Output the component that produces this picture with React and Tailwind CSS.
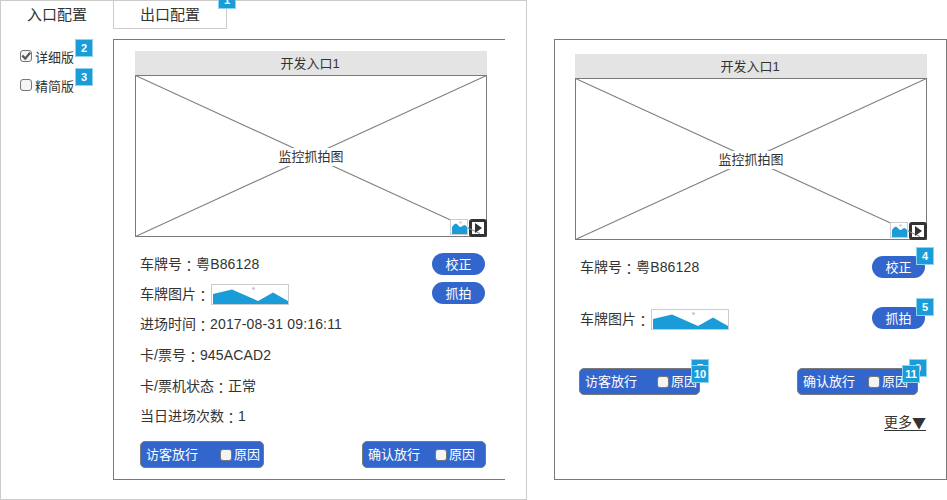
import React from "react";

const cjk = "font-['Liberation_Sans','Noto_Sans_CJK_SC',sans-serif]";

function Badge({ n, className }) {
  return (
    <span
      className={`absolute z-10 flex h-[18px] w-[18px] items-center justify-center border border-[#8fd3ef] bg-[#1a9cd8] font-['Liberation_Sans',sans-serif] text-[11px] leading-none font-bold text-white ${className}`}
    >
      {n}
    </span>
  );
}

function Box({ checked = false }) {
  return (
    <span className="flex h-3 w-3 shrink-0 rounded-[3px] border border-[#777] bg-[#f4f4f4]">
      {checked && (
        <svg viewBox="0 0 10 10" className="h-[10px] w-[10px] overflow-visible">
          <path d="M1.3 4.6 L4.2 7.6 L9.2 1.6" fill="none" stroke="#555" strokeWidth="2.2" />
        </svg>
      )}
    </span>
  );
}

function Plate() {
  return (
    <svg width="78" height="21" viewBox="0 0 78 21" className="ml-[1px] shrink-0">
      <rect x="0.5" y="0.5" width="77" height="20" fill="#fff" stroke="#ccc" />
      <path d="M2 10 L21 5.5 L47 17 L62 8.5 L77 17 V20 H2 Z" fill="#1a9cd8" />
      <circle cx="42.5" cy="4.5" r="1.6" fill="#ccc" />
    </svg>
  );
}

function Camera() {
  return (
    <div className="w-[352px]">
      <div className="flex h-6 items-center justify-center bg-[#e4e4e4] pt-[1px] pr-[2px] text-[13px]">开发入口1</div>
      <div className="relative flex h-[162px] items-center justify-center">
        <svg width="352" height="162" viewBox="0 0 352 162" className="absolute inset-0">
          <rect x="0.5" y="0.5" width="351" height="161" fill="#fff" stroke="#797979" />
          <path d="M0.5 0.5 L351.5 161.5 M0.5 161.5 L351.5 0.5" stroke="#808080" strokeWidth="1.1" />
        </svg>
        <span className="relative mt-[2px] flex h-[18px] items-center bg-white px-[2px] text-[13px]">监控抓拍图</span>
        <svg width="37" height="18" viewBox="0 0 37 18" className="absolute right-0 bottom-0">
          <rect x="0.5" y="0.5" width="17" height="15" fill="#fff" stroke="#ccc" />
          <path d="M2 8 L4 5.5 L6 4.5 L8 6 L9 7.5 L11 8 L13 6.5 L15 6 L17 8 V15 H2 Z" fill="#1a9cd8" />
          <circle cx="10.5" cy="3.5" r="1.2" fill="#ccc" />
          <rect x="20.5" y="1.5" width="15" height="15" rx="1.5" fill="#fff" stroke="#333" strokeWidth="3" />
          <path d="M18 9 L30 14.5" stroke="#868686" />
          <path d="M25 4 L32 9 L25 14 Z" fill="#333" />
        </svg>
      </div>
    </div>
  );
}

function Label({ name, children }) {
  return (
    <div className="flex items-center text-[14px] leading-none">
      <span>{name}</span>
      <span className="pt-[2px] font-['Noto_Sans_CJK_TC',sans-serif]">：</span>
      {typeof children === "string" ? <span className="tracking-[0.16px]">{children}</span> : children}
    </div>
  );
}

function Pill({ children }) {
  return (
    <button className="flex h-[22px] w-[53px] items-center justify-center rounded-full bg-[#3366cc] text-[13px] leading-none text-white">
      {children}
    </button>
  );
}

function Release({ name, className }) {
  return (
    <div
      className={`flex h-[27px] items-center justify-between rounded-[5px] border border-[#797979] bg-[#3366cc] pl-[5px] text-[13px] leading-none text-white ${className}`}
    >
      <span>{name}</span>
      <span className="flex items-center gap-[2px]">
        <Box />
        原因
      </span>
    </div>
  );
}

export default function App() {
  return (
    <div className={`relative flex h-[500px] w-[947px] overflow-hidden bg-white text-[#333] ${cjk}`}>
      <section className="h-[500px] w-[527px] border border-[#ccc]">
        <nav className="flex h-[28px] text-[15px] leading-none">
          <div className="flex w-[112px] items-center justify-center pb-[1px]">入口配置</div>
          <div className="relative flex w-[114px] items-center justify-center border-x border-b border-[#ccc]">
            出口配置
            <Badge n="1" className="-top-[10px] -right-[10px]" />
          </div>
        </nav>
        <div className="flex">
          <aside className="w-[112px] pt-[18px] pl-[19px] text-[13px] leading-none">
            <div className="relative flex h-[18px] items-center gap-[3px]">
              <Box checked />
              <span className="pt-[2px]">详细版</span>
              <Badge n="2" className="-top-[8px] left-[55px]" />
            </div>
            <div className="relative mt-[11px] flex h-[18px] items-center gap-[3px]">
              <Box />
              <span className="pt-[2px]">精简版</span>
              <Badge n="3" className="-top-[8px] left-[55px]" />
            </div>
          </aside>
          <main className="mt-[10px] h-[441px] w-[392px] border-y border-l border-[#797979] pt-[11px] pl-[21px]">
            <Camera />
            <div className="mt-[12px] flex w-[350px] justify-between pl-[5px]">
              <div className="flex flex-col">
                <div className="flex h-[30px] items-center"><Label name="车牌号">粤B86128</Label></div>
                <div className="flex h-[30px] items-center"><Label name="车牌图片"><Plate /></Label></div>
                <div className="flex h-[30px] items-center"><Label name="进场时间">2017-08-31 09:16:11</Label></div>
                <div className="flex h-[31px] items-center"><Label name="卡/票号">945ACAD2</Label></div>
                <div className="flex h-[31px] items-center"><Label name="卡/票机状态">正常</Label></div>
                <div className="flex h-[30px] items-center"><Label name="当日进场次数">1</Label></div>
              </div>
              <div className="flex flex-col gap-[7px] pt-[4px]">
                <Pill>校正</Pill>
                <Pill>抓拍</Pill>
              </div>
            </div>
            <div className="mt-[10px] flex w-[351px] justify-between pl-[5px]">
              <Release name="访客放行" className="w-[124px] pr-[3px]" />
              <Release name="确认放行" className="w-[124px] pr-[10px]" />
            </div>
          </main>
        </div>
      </section>

      <section className="mt-[39px] ml-[27px] h-[441px] w-[393px] border border-[#797979] pt-[14px] pl-[20px]">
        <Camera />
        <div className="mt-[16px] flex h-[22px] w-[350px] items-center justify-between pl-[5px]">
          <Label name="车牌号">粤B86128</Label>
          <div className="relative">
            <Pill>校正</Pill>
            <Badge n="4" className="-top-[9px] -right-[9px]" />
          </div>
        </div>
        <div className="mt-[29px] flex h-[22px] w-[350px] items-center justify-between pl-[5px]">
          <div className="pt-[2px]">
            <Label name="车牌图片"><Plate /></Label>
          </div>
          <div className="relative">
            <Pill>抓拍</Pill>
            <Badge n="5" className="-top-[9px] -right-[9px]" />
          </div>
        </div>
        <div className="mt-[39px] ml-[4px] flex w-[339px] justify-between">
          <div className="relative">
            <Release name="访客放行" className="w-[121px] pr-[2px]" />
            <Badge n="7" className="-top-[9px] -right-[9px]" />
            <Badge n="10" className="-top-[3px] -right-[9px]" />
          </div>
          <div className="relative">
            <Release name="确认放行" className="w-[121px] pr-[9px]" />
            <Badge n="9" className="-top-[9px] -right-[9px]" />
            <Badge n="11" className="-top-[3px] -right-[2px]" />
          </div>
        </div>
        <div className="mt-[20px] flex w-[351px] justify-end text-[14px] leading-[15px]">
          <a className="flex border-b border-[#333]">
            更多<span className="font-['Noto_Sans_CJK_SC',sans-serif]">▼</span>
          </a>
        </div>
      </section>
    </div>
  );
}
